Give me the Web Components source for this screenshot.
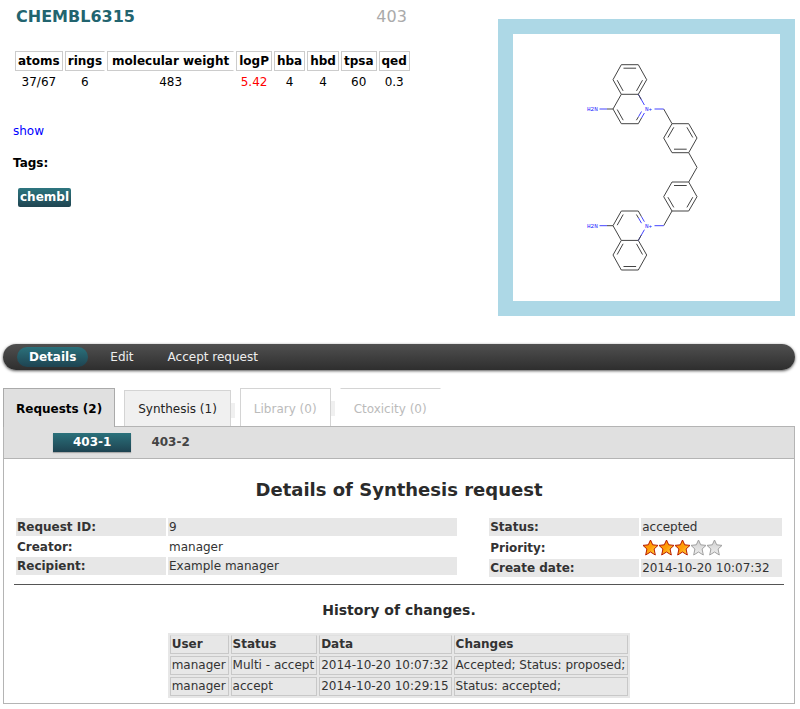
<!DOCTYPE html>
<html lang="en">
<head>
<meta charset="utf-8">
<meta name="viewport" content="width=device-width, initial-scale=1">
<title>CHEMBL6315</title>
<style>
body { margin: 0; background: #fff; color: #000; font: 12px/16px "DejaVu Sans", Verdana, sans-serif; }
</style>
</head>
<body>
<compound-page></compound-page>

<script>
const define = (name, html, setup) => {
  const template = document.createElement('template');
  template.innerHTML = html;
  customElements.define(name, class extends HTMLElement {
    connectedCallback() {
      if (this.shadowRoot) return;
      this.attachShadow({ mode: 'open' }).append(template.content.cloneNode(true));
      if (setup) setup(this, this.shadowRoot);
    }
  });
};

define('property-table', `
<style>
:host { display: block; }
table { border-spacing: 2px; }
th, td { padding: 1px 2px; text-align: center; }
th { border: 1px solid #ccc; font-weight: bold; line-height: 16px; }
td { line-height: 16px; }
.open { border-right-color: transparent; }
.wide { padding: 1px 4px; }
.alert { color: #f00; }
</style>
<table>
<thead><tr><th>atoms</th><th class="open">rings</th><th class="open wide">molecular weight</th><th>logP</th><th>hba</th><th>hbd</th><th>tpsa</th><th>qed</th></tr></thead>
<tbody><tr><td>37/67</td><td>6</td><td>483</td><td class="alert">5.42</td><td>4</td><td>4</td><td>60</td><td>0.3</td></tr></tbody>
</table>`);

define('tag-label', `
<style>
:host { display: inline-block; padding: 1px 2px; border-radius: 2px; background: linear-gradient(#2e7680, #1f4450); color: #fff; font-weight: bold; line-height: 17px; }
</style><slot></slot>`);

define('compound-summary', `
<style>
:host { display: block; }
header { display: flex; justify-content: space-between; align-items: baseline; padding: 0 5px 0 3px; font-size: 16px; line-height: 20px; }
h1 { margin: 0; font-size: 16px; color: #22646f; }
header span { color: #aaa; }
property-table { margin-top: 22px; }
.show { display: block; margin-top: 30px; color: #00f; text-decoration: none; }
h2 { margin: 16px 0 0; font-size: 12px; }
tag-label { margin: 17px 0 0 5px; }
</style>
<header><h1>CHEMBL6315</h1><span>403</span></header>
<property-table></property-table>
<a class="show" href="#structure">show</a>
<h2>Tags:</h2>
<tag-label>chembl</tag-label>`);

define('molecule-view', `
<style>
:host { display: block; border: 15px solid #add8e6; background: #fff; }
svg { display: block; }
text { font: 6px "Liberation Mono", monospace; fill: #22f; }
</style>
<svg width="267" height="267" viewBox="0 0 267 267" role="img" aria-label="Structure of CHEMBL6315">
<defs>
<g id="half" fill="none" stroke="#444" stroke-width="1">
<path d="M125.3 60.3H108.3L100 45.7 108.3 30.7H125.3L133.7 45.7 125.3 60.3M108.3 60.3L100 75 108.3 89.7H125.3M110.5 34.2H123.1M104.2 46.2L110.1 56.9M129.5 46.2L123.5 56.9M104.2 75.5L110.2 86.2M150.7 75L159 89.7H175.7L184 104 175.7 118.7H159L150.7 104 159 89.7M154.9 103.5L160.8 93.3M173.9 93.3L179.8 103.5M161 115.2H173.7M175.7 118.7L184 133.3"/>
<path d="M125.3 89.7L128.5 84M123.4 86.2L125.5 82.7"/>
<path stroke="#44f" d="M128.5 84L131.4 79M125.5 82.7L128.5 77.5M141.5 75H150.7M86.5 75H94M125.3 60.3L131.4 71"/>
<path d="M94 75H100M125.3 60.3L128.2 65.4"/>
</g>
</defs>
<use href="#half"/>
<use href="#half" transform="matrix(1 0 0 -1 0 266.7)"/>
<text x="74" y="77">H2N</text><text x="132" y="77">N+</text>
<text x="74" y="194">H2N</text><text x="132" y="194">N+</text>
</svg>`);

define('action-bar', `
<style>
:host { display: block; }
nav { display: flex; gap: 10px; align-items: center; padding: 3px 14px; border-radius: 13px; background: linear-gradient(#505050, #2e2e2e); box-shadow: 0 1px 3px #555; }
a { padding: 0 12px; border-radius: 10px; color: #eee; line-height: 20px; text-decoration: none; }
a[aria-current] { background: linear-gradient(#2b717b, #1e4351); color: #fff; font-weight: bold; }
</style>
<nav aria-label="Compound actions"><a href="#details" aria-current="page">Details</a><a href="#edit">Edit</a><a href="#accept">Accept request</a></nav>`);

define('request-tabs', `
<style>
:host { display: block; }
button { font: inherit; margin: 0; cursor: pointer; }
.tabs { display: flex; align-items: flex-end; gap: 9px; }
.tabs button { position: relative; padding: 11px 13px 8px; border: 1px solid #d4d4d4; border-bottom: 0; background: #fff; color: #bbb; line-height: 18px; }
.tabs .active { margin-bottom: -1px; padding: 11px 12px 9px; border-color: #aaa; background: #e0e0e0; color: #000; font-weight: bold; z-index: 1; }
.tabs .ready { padding-top: 9px; background: #f0f0f0; color: #222; }
.tabs .bare { border-left-color: transparent; border-right-color: transparent; }
.notch::after { content: ""; position: absolute; left: 100%; top: 12px; width: 4px; height: 15px; margin-left: 1px; background: #f0f0f0; }
.panel { border: 1px solid #b4b4b4; }
.sub { display: flex; padding: 6px 49px; background: #e0e0e0; border-bottom: 1px solid #b4b4b4; }
.sub button { padding: 0 20px; border: 0; background: none; color: #444; font-weight: bold; line-height: 19px; }
.sub .active { background: linear-gradient(#2b717b, #1e4351); color: #fff; box-shadow: 0 1px 1px #aaa; }
</style>
<div class="tabs" role="tablist" aria-label="Sections"><button class="active" role="tab" aria-selected="true">Requests (2)</button><button class="ready notch" role="tab">Synthesis (1)</button><button class="notch" role="tab" disabled>Library (0)</button><button class="bare" role="tab" disabled>Ctoxicity (0)</button></div>
<div class="panel">
<div class="sub" role="tablist" aria-label="Requests"><button class="active" role="tab" aria-selected="true">403-1</button><button role="tab">403-2</button></div>
<slot></slot>
</div>`);

define('star-rating', `
<style>
:host { display: flex; }
svg { display: block; }
</style>`, (host, root) => {
  const value = Number(host.getAttribute('value'));
  const star = 'M8.5 1L10.7 5.8 16 6.4 12.1 10 13.3 16 8.5 13 3.7 16 4.9 10 1 6.4 6.3 5.8Z';
  let stars = '';
  for (let i = 0; i < 5; i++) {
    const on = i < value;
    stars += `<path transform="translate(${i * 16} 0)" d="${star}" fill="url(#${on ? 'on' : 'off'})" stroke="${on ? '#b81c00' : '#a0a0a0'}"/>`;
  }
  root.innerHTML += `<svg width="82" height="18" viewBox="0 0 82 18" role="img" aria-label="${value} of 5 stars">
<defs><linearGradient id="on" x2="1" y2="1"><stop stop-color="#ff8a00"/><stop offset=".5" stop-color="#ff9d08"/><stop offset="1" stop-color="#ffe050"/></linearGradient>
<linearGradient id="off" x2="0" y2="1"><stop stop-color="#d0d0d0"/><stop offset="1" stop-color="#eee"/></linearGradient></defs>${stars}</svg>`;
});

define('request-facts', `
<style>
:host { display: grid; grid-template-columns: 3fr 2fr; column-gap: 28px; align-items: start; }
table { width: 100%; table-layout: fixed; border-spacing: 2px; }
th, td { padding: 1px; text-align: left; line-height: 16px; }
th { width: 148px; }
tr:nth-child(odd) > * { background: #e7e7e7; }
tr:nth-child(even) > * { padding-bottom: 0; }
</style>
<table>
<tr><th scope="row">Request ID:</th><td>9</td></tr>
<tr><th scope="row">Creator:</th><td>manager</td></tr>
<tr><th scope="row">Recipient:</th><td>Example manager</td></tr>
</table>
<table>
<tr><th scope="row">Status:</th><td>accepted</td></tr>
<tr><th scope="row">Priority:</th><td><star-rating value="3"></star-rating></td></tr>
<tr><th scope="row">Create date:</th><td>2014-10-20 10:07:32</td></tr>
</table>`);

define('history-table', `
<style>
:host { display: block; }
table { margin: 0 auto; border-spacing: 2px; background: #e7e7e7; }
th, td { padding: 1px 2px 1px 1px; border: 1px solid #c8c8c8; text-align: left; line-height: 15px; }
th { border-top-color: #e0e0e0; }
</style>
<table>
<thead><tr><th>User</th><th>Status</th><th>Data</th><th>Changes</th></tr></thead>
<tbody>
<tr><td>manager</td><td>Multi - accept</td><td>2014-10-20 10:07:32</td><td>Accepted; Status: proposed;</td></tr>
<tr><td>manager</td><td>accept</td><td>2014-10-20 10:29:15</td><td>Status: accepted;</td></tr>
</tbody>
</table>`);

define('request-details', `
<style>
:host { display: block; padding: 20px 10px 5px; color: #333; }
h2, h3 { margin: 0; text-align: center; color: #2b2b2b; }
h2 { font-size: 18px; line-height: 22px; }
h3 { margin-top: 16px; font-size: 14px; line-height: 18px; }
request-facts { margin-top: 15px; }
hr { margin: 5px 0 0; border: 0; border-top: 1px solid #555; }
history-table { margin-top: 14px; }
</style>
<h2>Details of Synthesis request</h2>
<request-facts></request-facts>
<hr>
<h3>History of changes.</h3>
<history-table></history-table>`);

define('compound-page', `
<style>
:host { display: block; padding: 0 5px 5px 3px; }
.top { display: flex; justify-content: space-between; align-items: flex-start; }
compound-summary { padding: 7px 0 0 10px; }
molecule-view { margin-top: 19px; }
action-bar { margin-top: 28px; }
request-tabs { margin-top: 18px; }
</style>
<div class="top"><compound-summary></compound-summary><molecule-view></molecule-view></div>
<action-bar></action-bar>
<request-tabs><request-details></request-details></request-tabs>`);
</script>
</body>
</html>
